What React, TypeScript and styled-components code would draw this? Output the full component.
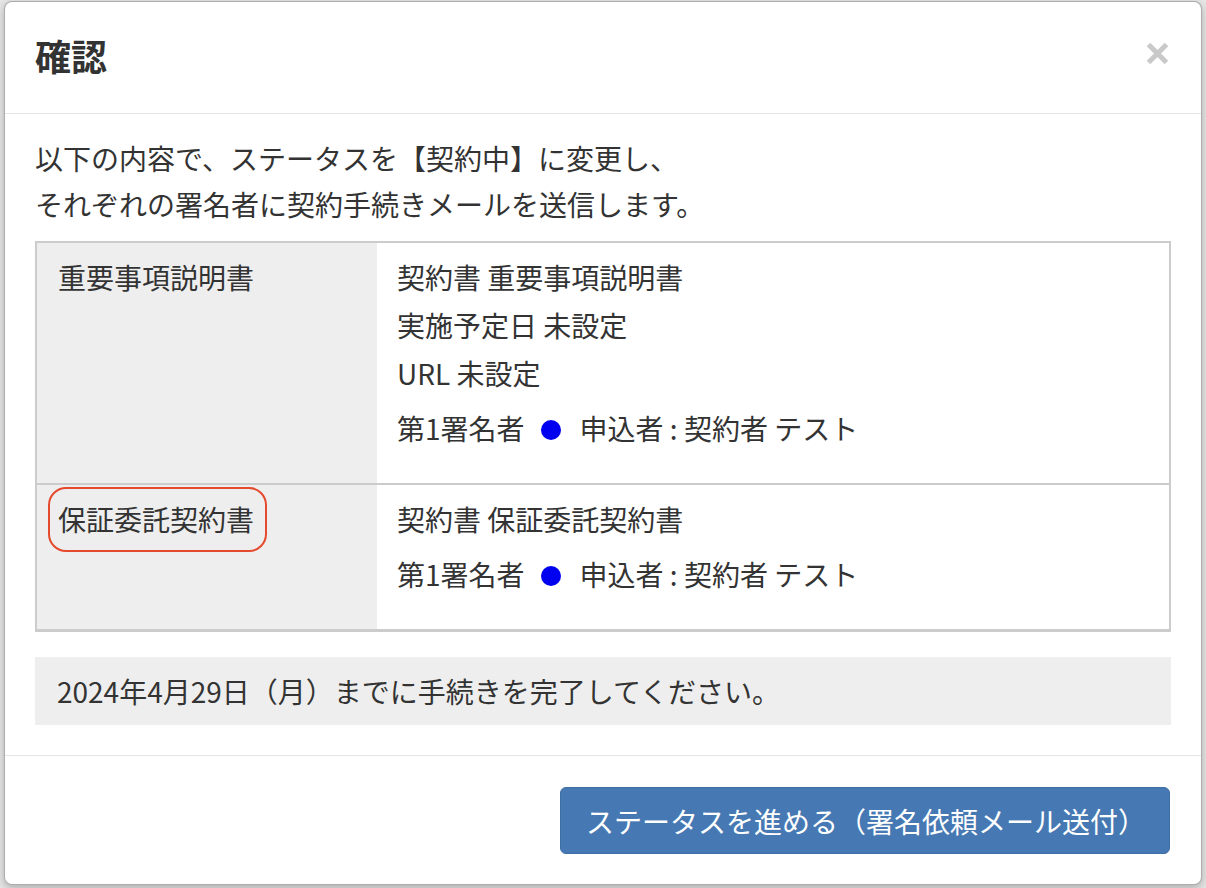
import React from "react";
import styled, { createGlobalStyle } from "styled-components";

const GlobalStyle = createGlobalStyle`
  html, body {
    margin: 0;
    padding: 0;
    background: #e6e6e6;
  }
  body {
    font-family: "Noto Sans CJK JP", "Noto Sans", "Liberation Sans", sans-serif;
    color: #333;
  }
  * { box-sizing: border-box; }
`;

const Backdrop = styled.div`
  min-height: 888px;
  padding: 1px 4px 0 4px;
`;

const Modal = styled.div`
  background: #fff;
  border: 1px solid rgba(0, 0, 0, 0.32);
  border-radius: 8px;
  box-shadow: 0 3px 9px rgba(0, 0, 0, 0.25);
  overflow: hidden;
`;

const Header = styled.div`
  height: 112px;
  border-bottom: 1px solid #e5e5e5;
  padding: 0 32px 0 30px;
  display: flex;
  align-items: center;
  justify-content: space-between;
`;

const Title = styled.h4`
  margin: 0;
  font-size: 36px;
  font-weight: 700;
  line-height: 1.4;
  color: #333;
  padding-bottom: 4px;
`;

const CloseButton = styled.button`
  border: 0;
  background: transparent;
  padding: 0;
  width: 24px;
  height: 24px;
  margin-bottom: 8px;
  cursor: pointer;
  display: flex;
  align-items: center;
  justify-content: center;
`;

const Body = styled.div`
  padding: 21px 30px 30px 30px;
`;

const Lead = styled.p`
  margin: 0 0 14px 0;
  font-size: 28px;
  line-height: 46px;
`;

const Table = styled.div`
  border: 2px solid #cccccc;
  border-bottom-width: 3px;
`;

const Row = styled.div`
  display: grid;
  grid-template-columns: 340px 1fr;
  & + & {
    border-top: 2px solid #cccccc;
  }
`;

const LabelCell = styled.div`
  background: #eeeeee;
  padding: 10px 20px 31px 21px;
  font-size: 28px;
  line-height: 48px;
`;

const Label = styled.span<{ $marked?: boolean }>`
  position: relative;
  display: inline-block;
  &::after {
    content: "";
    display: ${(p) => (p.$marked ? "block" : "none")};
    position: absolute;
    top: -8px;
    bottom: -9px;
    left: -10px;
    right: -13px;
    border: 2.5px solid #e5492e;
    border-radius: 18px;
  }
`;

const DataCell = styled.div`
  padding: 10px 20px 31px 20px;
  font-size: 28px;
  line-height: 48px;
`;

const Line = styled.div``;

const SignerLine = styled.div`
  margin-top: 7px;
  display: flex;
  align-items: center;
`;

const Dot = styled.span`
  display: inline-block;
  width: 20px;
  height: 20px;
  border-radius: 50%;
  background: #0000f0;
  margin: 3px 19px 0 16px;
`;

const Notice = styled.div`
  margin-top: 25px;
  background: #eeeeee;
  padding: 11px 22px;
  font-size: 28px;
  line-height: 46px;
`;

const Footer = styled.div`
  border-top: 1px solid #e5e5e5;
  padding: 31px 31px 30px 30px;
  display: flex;
  justify-content: flex-end;
`;

const PrimaryButton = styled.button`
  height: 67px;
  padding: 0 24px 0 25px;
  background: #4679b3;
  border: 1px solid #3f6ea5;
  border-radius: 6px;
  color: #fff;
  font-family: "Noto Sans CJK JP", "Noto Sans", sans-serif;
  font-size: 28px;
  line-height: 1;
  cursor: pointer;
  width: 610px;
`;

const CloseIcon = () => (
  <svg width="23" height="23" viewBox="0 0 23 23" aria-hidden="true">
    <path d="M2.5 2.5 L20.5 20.5 M20.5 2.5 L2.5 20.5" stroke="#c9c9c9" strokeWidth="5" strokeLinecap="butt" fill="none" />
  </svg>
);

type Doc = {
  label: string;
  marked?: boolean;
  lines: string[];
  signer: string;
};

const docs: Doc[] = [
  {
    label: "重要事項説明書",
    lines: ["契約書 重要事項説明書", "実施予定日 未設定", "URL 未設定"],
    signer: "申込者 : 契約者 テスト",
  },
  {
    label: "保証委託契約書",
    marked: true,
    lines: ["契約書 保証委託契約書"],
    signer: "申込者 : 契約者 テスト",
  },
];

export default function App() {
  return (
    <>
      <GlobalStyle />
      <Backdrop>
        <Modal>
          <Header>
            <Title>確認</Title>
            <CloseButton aria-label="閉じる">
              <CloseIcon />
            </CloseButton>
          </Header>
          <Body>
            <Lead>
              以下の内容で、ステータスを【契約中】に変更し、
              <br />
              それぞれの署名者に契約手続きメールを送信します。
            </Lead>
            <Table>
              {docs.map((d) => (
                <Row key={d.label}>
                  <LabelCell>
                    <Label $marked={d.marked}>{d.label}</Label>
                  </LabelCell>
                  <DataCell>
                    {d.lines.map((l) => (
                      <Line key={l}>{l}</Line>
                    ))}
                    <SignerLine>
                      第1署名者
                      <Dot />
                      {d.signer}
                    </SignerLine>
                  </DataCell>
                </Row>
              ))}
            </Table>
            <Notice>2024年4月29日（月）までに手続きを完了してください。</Notice>
          </Body>
          <Footer>
            <PrimaryButton>ステータスを進める（署名依頼メール送付）</PrimaryButton>
          </Footer>
        </Modal>
      </Backdrop>
    </>
  );
}
